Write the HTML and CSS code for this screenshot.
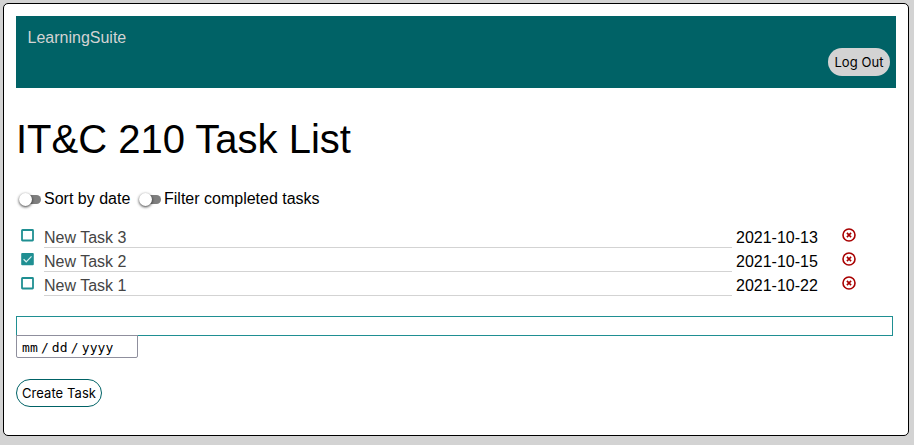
FILE: index.html
```html
<!DOCTYPE html>
<html lang="en">
<head>
<meta charset="utf-8">
<title>IT&amp;C 210 Task List</title>
<link rel="stylesheet" href="styles.css">
</head>
<body>
<main class="card">
  <header class="topbar">
    <a class="brand">LearningSuite</a>
    <button class="logout">Log Out</button>
  </header>
  <h1>IT&amp;C 210 Task List</h1>
  <div class="filters">
    <span class="toggle"></span><span class="sort-label">Sort by date</span>
    <span class="toggle"></span><span>Filter completed tasks</span>
  </div>
  <ul class="tasks">
    <li class="task">
      <svg class="check" viewBox="0 0 14 14"><rect x="2" y="2" width="11" height="10.5" rx=".5" fill="none" stroke="#1f8f92" stroke-width="1.8"/></svg>
      <span class="name">New Task 3</span><span class="date">2021-10-13</span>
      <svg class="remove" viewBox="0 0 14 14"><circle cx="7" cy="7" r="6"/><path d="M4.9 4.9l4.2 4.2M9.1 4.9l-4.2 4.2"/></svg>
    </li>
    <li class="task">
      <svg class="check" viewBox="0 0 14 14"><rect x="1.2" y="1" width="12.6" height="12.2" rx="1" fill="#1f8f92"/><path d="M3.6 7.3l2.6 2.5 5.3-5.4" fill="none" stroke="#d5eeee" stroke-width="1.2"/></svg>
      <span class="name">New Task 2</span><span class="date">2021-10-15</span>
      <svg class="remove" viewBox="0 0 14 14"><circle cx="7" cy="7" r="6"/><path d="M4.9 4.9l4.2 4.2M9.1 4.9l-4.2 4.2"/></svg>
    </li>
    <li class="task">
      <svg class="check" viewBox="0 0 14 14"><rect x="2" y="2" width="11" height="10.5" rx=".5" fill="none" stroke="#1f8f92" stroke-width="1.8"/></svg>
      <span class="name">New Task 1</span><span class="date">2021-10-22</span>
      <svg class="remove" viewBox="0 0 14 14"><circle cx="7" cy="7" r="6"/><path d="M4.9 4.9l4.2 4.2M9.1 4.9l-4.2 4.2"/></svg>
    </li>
  </ul>
  <form class="new-task">
    <input class="title-input" type="text">
    <div class="date-input"><span>mm</span><i>/</i><span>dd</span><i>/</i><span>yyyy</span></div>
    <button class="create" type="button">Create Task</button>
  </form>
</main>
</body>
</html>
```
FILE: styles.css
```css
* { box-sizing: border-box; }
body {
  margin: 0;
  padding: 3px 5px 0 3px;
  background: #d3d3d3;
  font: 16px/18px "Liberation Sans", Arial, sans-serif;
  color: #000;
}
.card {
  height: 433px;
  padding: 12px;
  border: 1px solid #000;
  border-radius: 5px;
  background: #fff;
}
.topbar {
  display: flex;
  justify-content: space-between;
  width: 880px;
  height: 72px;
  padding: 13px 6px 12px 11.5px;
  background: #006266;
}
.brand { color: #d3d3d3; }
button {
  height: 28px;
  padding: 0;
  border-radius: 14px;
  font: 13px Inter, sans-serif;
  letter-spacing: .08px;
  color: #000;
}
.logout {
  align-self: flex-end;
  width: 62px;
  border: 0;
  background: #d3d3d3;
}
h1 {
  margin: 27px 0 0;
  font-size: 40px;
  font-weight: 400;
  line-height: 48px;
}
.filters {
  display: flex;
  align-items: center;
  height: 18px;
  margin-top: 27px;
  padding-left: 3px;
}
.toggle {
  display: flex;
  align-items: center;
  flex: none;
  width: 25px;
  height: 14px;
}
.toggle::before {
  content: "";
  z-index: 1;
  width: 13px;
  height: 13px;
  border-radius: 50%;
  background: #fff;
  box-shadow: 0 1px 3px rgba(0, 0, 0, .8);
}
.toggle::after {
  content: "";
  width: 15px;
  height: 9px;
  margin-left: -6px;
  border-radius: 5px;
  background: #7f7f7f;
}
.sort-label { width: 95px; white-space: nowrap; }
.tasks {
  list-style: none;
  margin: 16px 0 0;
  padding: 0;
}
.task {
  display: grid;
  grid-template-columns: 28px 688px 4px 105.5px 14px;
  height: 24px;
}
.check { width: 14px; height: 14px; margin: 4px 0 0 4px; }
.name {
  height: 24px;
  padding-top: 5px;
  border-bottom: 1px solid #d3d3d3;
  color: #444;
}
.date { grid-column: 4; padding-top: 5px; }
.remove {
  width: 14px;
  height: 14px;
  margin-top: 4px;
  fill: none;
  stroke: #a80000;
  stroke-width: 1.6;
}
.new-task { margin-top: 20px; }
.title-input {
  display: block;
  width: 877px;
  height: 20px;
  border: 1px solid #1f8f92;
  background: #fff;
}
.date-input {
  display: flex;
  position: relative;
  width: 122px;
  height: 23px;
  margin-top: -1px;
  padding-left: 5px;
  border: 1px solid #8f8f9d;
  border-radius: 0 0 2px 2px;
  background: #fff;
  font: 13px/23px "DejaVu Sans Mono", monospace;
  letter-spacing: .1px;
}
.date-input i { width: 14px; font-style: normal; text-align: center; }
.create {
  display: block;
  width: 86px;
  margin-top: 21px;
  border: 1px solid #006266;
  background: #fff;
}
```
